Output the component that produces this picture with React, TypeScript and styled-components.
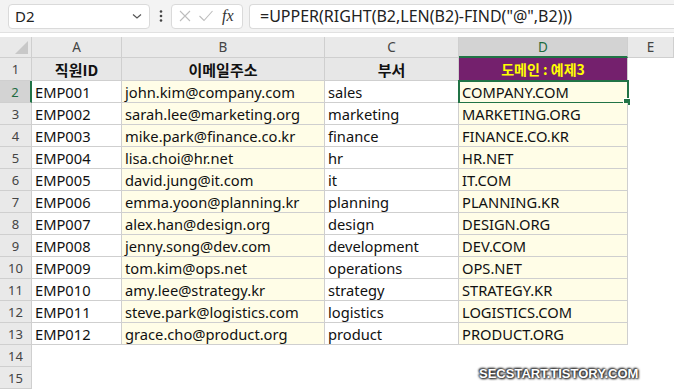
import React from "react";
import styled, { createGlobalStyle, css } from "styled-components";

const Global = createGlobalStyle`
  html, body { margin: 0; padding: 0; background: #fff; }
  body { width: 674px; height: 391px; overflow: hidden; font-family: "Noto Sans CJK KR", "Noto Sans", sans-serif; }
`;

const Page = styled.div`
  width: 674px;
  height: 391px;
  position: relative;
  overflow: hidden;
  background: #fff;
`;

const Toolbar = styled.div`
  height: 33px;
  background: #f3f3f3;
  display: flex;
  align-items: center;
  padding: 0 0 0 8px;
  border-bottom: 1px solid #e1e1e1;
  box-sizing: border-box;
`;

const NameBox = styled.div`
  width: 142px;
  height: 25px;
  box-sizing: border-box;
  background: #fff;
  border: 1px solid #dadada;
  border-radius: 4px;
  display: flex;
  align-items: center;
  justify-content: space-between;
  padding: 0 6px 0 6px;
  font-family: "Noto Sans", sans-serif;
  font-size: 15px;
  color: #222;
`;

const Dots = styled.div`
  width: 21px;
  display: flex;
  justify-content: center;
`;

const FxBox = styled.div`
  width: 72px;
  height: 25px;
  box-sizing: border-box;
  background: #fff;
  border: 1px solid #dadada;
  border-radius: 4px;
  display: flex;
  align-items: center;
  padding: 0 4px 0 6px;
  gap: 6px;
`;

const Fx = styled.span`
  font-family: "Liberation Serif", serif;
  font-style: italic;
  font-size: 16px;
  color: #333;
  margin-left: 2px;
`;

const FormulaBox = styled.div`
  flex: 1;
  margin-left: 6px;
  height: 25px;
  box-sizing: border-box;
  background: #fff;
  border: 1px solid #dadada;
  border-right: none;
  border-radius: 4px 0 0 4px;
  display: flex;
  align-items: center;
  padding-left: 10px;
  font-family: "Noto Sans", sans-serif;
  font-size: 16px;
  color: #222;
  white-space: nowrap;
`;

const Spacer = styled.div`
  height: 4px;
  background: #fff;
`;

const Grid = styled.div`
  display: grid;
  grid-template-columns: 32px 90px 203px 134px 169px 1fr;
  grid-template-rows: 21px 23px repeat(14, 22px);
`;

const Corner = styled.div`
  background: #e9e9e9;
  border-right: 1px solid #cfcfcf;
  border-bottom: 1px solid #cfcfcf;
  box-sizing: border-box;
  position: relative;
  &::after {
    content: "";
    position: absolute;
    right: 3px;
    bottom: 3px;
    width: 0;
    height: 0;
    border-left: 13px solid transparent;
    border-bottom: 13px solid #c8c8c8;
  }
`;

const ColHead = styled.div<{ $sel?: boolean }>`
  background: ${(p) => (p.$sel ? "#d3d3d3" : "#e9e9e9")};
  border-right: 1px solid #cfcfcf;
  border-bottom: ${(p) => (p.$sel ? "2px solid #217346" : "1px solid #cfcfcf")};
  box-sizing: border-box;
  display: flex;
  align-items: center;
  justify-content: center;
  font-family: "Noto Sans", sans-serif;
  font-size: 13.5px;
  color: ${(p) => (p.$sel ? "#1e6b3f" : "#444")};
`;

const RowHead = styled.div<{ $sel?: boolean }>`
  background: ${(p) => (p.$sel ? "#d3d3d3" : "#e9e9e9")};
  border-right: ${(p) => (p.$sel ? "2px solid #217346" : "1px solid #cfcfcf")};
  border-bottom: 1px solid #cfcfcf;
  box-sizing: border-box;
  display: flex;
  align-items: center;
  justify-content: center;
  font-family: "Noto Sans", sans-serif;
  font-size: 13px;
  color: ${(p) => (p.$sel ? "#1e6b3f" : "#444")};
`;

const HeadCell = styled.div<{ $accent?: boolean }>`
  background: ${(p) => (p.$accent ? "#74206d" : "#e7e7e7")};
  color: ${(p) => (p.$accent ? "#ffff00" : "#111")};
  border-right: 1px solid #cfcfcf;
  border-bottom: 1px solid #cfcfcf;
  box-sizing: border-box;
  display: flex;
  align-items: center;
  justify-content: center;
  font-family: "Noto Sans CJK KR", "Noto Sans", sans-serif;
  font-weight: 700;
  font-size: ${(p) => (p.$accent ? "14px" : "15px")};
`;

const Cell = styled.div<{ $tint?: boolean; $active?: boolean }>`
  background: ${(p) => (p.$tint ? "#fffde7" : "#fff")};
  border-right: 1px solid #cfcfcf;
  border-bottom: 1px solid #cfcfcf;
  box-sizing: border-box;
  display: flex;
  align-items: center;
  padding-left: 3px;
  font-family: "Noto Sans", "Noto Sans CJK KR", sans-serif;
  font-size: 14.7px;
  color: #111;
  white-space: nowrap;
  overflow: visible;
  position: relative;
  ${(p) =>
    p.$active &&
    css`
      &::before {
        content: "";
        position: absolute;
        left: -1px;
        top: -1px;
        right: -2px;
        bottom: -2px;
        border: 2px solid #217346;
        pointer-events: none;
      }
      &::after {
        content: "";
        position: absolute;
        right: -4px;
        bottom: -4px;
        width: 6px;
        height: 6px;
        background: #217346;
        border: 1px solid #fff;
      }
    `}
`;

const Blank = styled.div`
  background: #fff;
`;

const Watermark = styled.div`
  position: absolute;
  left: 479px;
  top: 366px;
  font-family: "Liberation Sans", sans-serif;
  font-weight: 700;
  font-size: 13px;
  color: #fff;
  text-shadow: 0 0 2px #333, 0 0 3px #333, 1px 1px 2px #222, -1px -1px 2px #222;
`;

const rows = [
  ["EMP001", "john.kim@company.com", "sales", "COMPANY.COM"],
  ["EMP002", "sarah.lee@marketing.org", "marketing", "MARKETING.ORG"],
  ["EMP003", "mike.park@finance.co.kr", "finance", "FINANCE.CO.KR"],
  ["EMP004", "lisa.choi@hr.net", "hr", "HR.NET"],
  ["EMP005", "david.jung@it.com", "it", "IT.COM"],
  ["EMP006", "emma.yoon@planning.kr", "planning", "PLANNING.KR"],
  ["EMP007", "alex.han@design.org", "design", "DESIGN.ORG"],
  ["EMP008", "jenny.song@dev.com", "development", "DEV.COM"],
  ["EMP009", "tom.kim@ops.net", "operations", "OPS.NET"],
  ["EMP010", "amy.lee@strategy.kr", "strategy", "STRATEGY.KR"],
  ["EMP011", "steve.park@logistics.com", "logistics", "LOGISTICS.COM"],
  ["EMP012", "grace.cho@product.org", "product", "PRODUCT.ORG"],
];

export default function App() {
  return (
    <Page>
      <Global />
      <Toolbar>
        <NameBox>
          <span>D2</span>
          <svg width="12" height="12" viewBox="0 0 12 12">
            <path d="M2 4.5 L6 8 L10 4.5" fill="none" stroke="#555" strokeWidth="1.2" />
          </svg>
        </NameBox>
        <Dots>
          <svg width="4" height="14" viewBox="0 0 4 14">
            <circle cx="2" cy="2.5" r="1.3" fill="#444" />
            <circle cx="2" cy="7" r="1.3" fill="#444" />
            <circle cx="2" cy="11.5" r="1.3" fill="#444" />
          </svg>
        </Dots>
        <FxBox>
          <svg width="14" height="14" viewBox="0 0 14 14">
            <path d="M2 2 L12 12 M12 2 L2 12" stroke="#bdbdbd" strokeWidth="1.1" />
          </svg>
          <svg width="16" height="14" viewBox="0 0 16 14">
            <path d="M1.5 7 L6 11.5 L14.5 2" fill="none" stroke="#bdbdbd" strokeWidth="1.1" />
          </svg>
          <Fx>fx</Fx>
        </FxBox>
        <FormulaBox>=UPPER(RIGHT(B2,LEN(B2)-FIND("@",B2)))</FormulaBox>
      </Toolbar>
      <Spacer />
      <Grid>
        <Corner />
        <ColHead>A</ColHead>
        <ColHead>B</ColHead>
        <ColHead>C</ColHead>
        <ColHead $sel>D</ColHead>
        <ColHead>E</ColHead>

        <RowHead>1</RowHead>
        <HeadCell>직원ID</HeadCell>
        <HeadCell>이메일주소</HeadCell>
        <HeadCell>부서</HeadCell>
        <HeadCell $accent>도메인 : 예제3</HeadCell>
        <Blank />

        {rows.map((r, i) => (
          <React.Fragment key={r[0]}>
            <RowHead $sel={i === 0}>{i + 2}</RowHead>
            <Cell>{r[0]}</Cell>
            <Cell $tint>{r[1]}</Cell>
            <Cell>{r[2]}</Cell>
            <Cell $tint $active={i === 0}>{r[3]}</Cell>
            <Blank />
          </React.Fragment>
        ))}

        <RowHead>14</RowHead>
        <Blank /><Blank /><Blank /><Blank /><Blank />
        <RowHead>15</RowHead>
        <Blank /><Blank /><Blank /><Blank /><Blank />
      </Grid>
      <Watermark>SECSTART.TISTORY.COM</Watermark>
    </Page>
  );
}
